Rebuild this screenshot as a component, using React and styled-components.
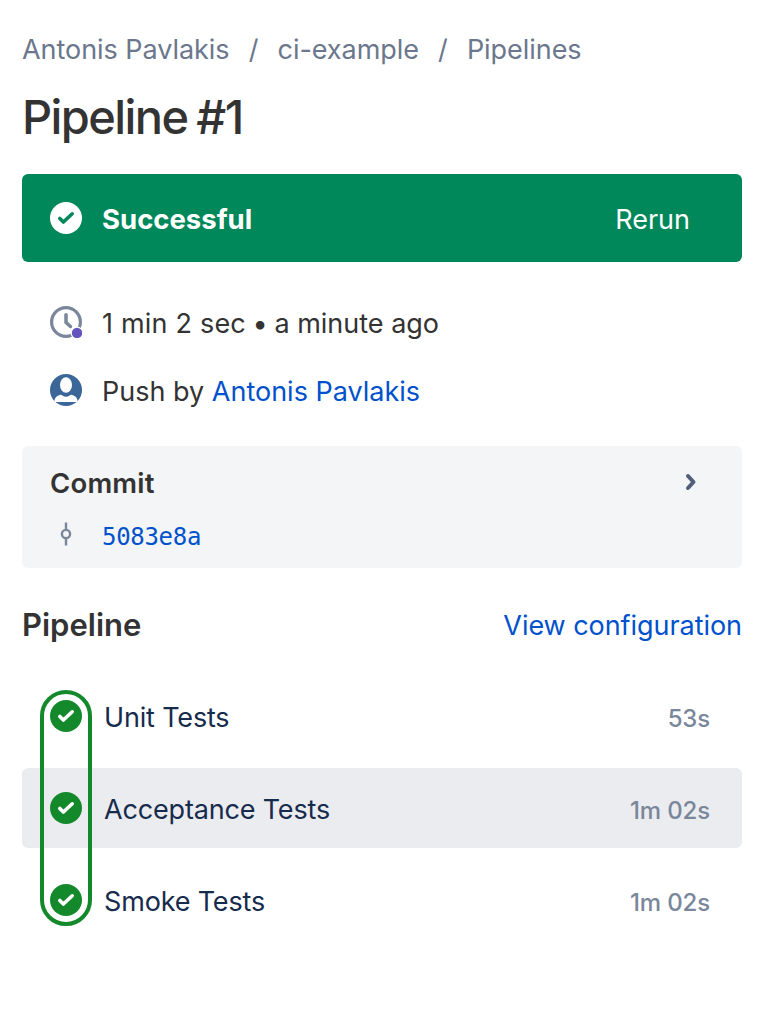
import React from "react";
import styled, { createGlobalStyle } from "styled-components";

const GlobalStyle = createGlobalStyle`
  *, *::before, *::after { box-sizing: border-box; }
  body {
    margin: 0;
    background: #fff;
    color: #333;
    font: 400 27px/40px Inter, "Liberation Sans", sans-serif;
  }
  h1, h2, h3, p, ul, ol { margin: 0; padding: 0; }
  svg { display: block; flex: none; }
`;

const Page = styled.main`
  width: 762px;
  min-height: 1036px;
  padding: 30px 20px 0 22px;
`;

const Breadcrumbs = styled.nav`
  display: flex;
  color: #6b778c;
`;

const Crumb = styled.span`
  letter-spacing: -0.05px;
  & + &::before {
    content: "/";
    display: inline-block;
    width: 48px;
    text-align: center;
  }
`;

const Title = styled.h1`
  margin-top: 17px;
  font-size: 47px;
  font-weight: 500;
  line-height: 60px;
  letter-spacing: -1.6px;
  word-spacing: -2px;
`;

const Banner = styled.section`
  display: flex;
  align-items: center;
  height: 88px;
  margin-top: 27px;
  padding: 0 52px 0 28px;
  border-radius: 6px;
  background: #00875a;
  color: #fff;
`;

const BannerText = styled.strong`
  flex: 1;
  margin-left: 20px;
  padding-top: 2px;
  font-size: 27.5px;
  font-weight: 700;
`;

const TextButton = styled.button`
  padding: 3px 0 0;
  border: 0;
  background: none;
  color: inherit;
  font: inherit;
`;

const Details = styled.div`
  display: grid;
  gap: 28px;
  padding: 40px 28px 0;
`;

const DetailRow = styled.div`
  display: flex;
  align-items: center;
  gap: 20px;
  height: 40px;
`;

const Link = styled.a`
  color: #0052cc;
`;

const DetailText = styled.p`
  padding-top: 3px;
`;

const Elapsed = styled.span`
  letter-spacing: 0.2px;
`;

const Separator = styled.span`
  margin: 0 -1px;
`;

const CommitCard = styled.section`
  height: 122px;
  margin-top: 36px;
  padding: 16px 44px 0 28px;
  border-radius: 6px;
  background: #f4f5f7;
`;

const CardHeader = styled.header`
  display: flex;
  align-items: center;
  justify-content: space-between;
  height: 41px;
`;

const Heading = styled.h2`
  font-size: ${(p) => p.$size || 27}px;
  font-weight: 600;
  letter-spacing: ${(p) => p.$spacing || 0}px;
`;

const CommitRow = styled.div`
  display: flex;
  align-items: center;
  gap: 20px;
  height: 40px;
  margin-top: 11px;
`;

const Hash = styled.a`
  padding-top: 5px;
  color: #0052cc;
  font: 24px/40px "DejaVu Sans Mono", monospace;
  letter-spacing: -0.3px;
`;

const SectionHeader = styled.header`
  display: flex;
  justify-content: space-between;
  height: 41px;
  margin-top: 37px;
`;

const ConfigLink = styled(Link)`
  padding-top: 1px;
  letter-spacing: -0.05px;
`;

const Stages = styled.ol`
  position: relative;
  display: grid;
  gap: 12px;
  margin-top: 30px;
  list-style: none;
`;

const StageGroup = styled.span`
  position: absolute;
  top: 14px;
  bottom: 14px;
  left: 18px;
  width: 52px;
  border: 4px solid #14892c;
  border-radius: 26px;
`;

const Stage = styled.li`
  display: flex;
  align-items: center;
  height: 80px;
  padding: 0 32px 0 28px;
  border-radius: 6px;
  background: ${(p) => (p.$active ? "#ebecf0" : "transparent")};
  color: #172b4d;
`;

const StageName = styled.span`
  flex: 1;
  margin-left: 22px;
  padding-top: 4px;
  letter-spacing: -0.17px;
`;

const Duration = styled.span`
  padding-top: 6px;
  color: #7a869a;
  font-size: 24px;
  font-weight: 500;
  letter-spacing: -0.15px;
`;

function CheckCircle({ fill, mark }) {
  return (
    <svg width="32" height="32" viewBox="4 4 16 16">
      <circle cx="12" cy="12" r="8" fill={fill} />
      <path
        d="M8.9 12.2L10.7 14L15.1 9.9"
        fill="none"
        stroke={mark}
        strokeWidth="1.8"
        strokeLinecap="round"
        strokeLinejoin="round"
      />
    </svg>
  );
}

function ClockIcon() {
  return (
    <svg width="32" height="32" viewBox="0 0 32 32" fill="none">
      <circle cx="16" cy="16" r="14.4" stroke="#7a869a" strokeWidth="3.2" />
      <path d="M16 8.8V16.5L20.5 20.5" stroke="#7a869a" strokeWidth="3.5" strokeLinecap="round" strokeLinejoin="round" />
      <circle cx="27" cy="27" r="6.5" fill="#fff" />
      <circle cx="27" cy="27" r="5.2" fill="#6554c0" />
    </svg>
  );
}

function AvatarIcon() {
  return (
    <svg width="32" height="32" viewBox="0 0 32 32">
      <circle cx="16" cy="16" r="16" fill="#3b6698" />
      <ellipse cx="16" cy="11" rx="6" ry="7.8" fill="#fff" />
      <path d="M4.400 28c0-4 2-6.200 6.200-7.200 1.300 0 2.700 2 5.400 2s4.100-2 5.400-2c4.200 1 6.200 3.200 6.200 7.200z" fill="#fff" />
    </svg>
  );
}

function CommitIcon() {
  return (
    <svg width="32" height="32" viewBox="0 0 32 32" fill="none" stroke="#7a869a">
      <circle cx="16" cy="16" r="4.1" strokeWidth="2.4" />
      <path d="M16 4.5V11M16 21V27.5" strokeWidth="2.4" />
    </svg>
  );
}

function ChevronIcon() {
  return (
    <svg width="14" height="20" viewBox="0 0 14 20" fill="none">
      <path d="M4 3L9.5 9L4 15" stroke="#505f79" strokeWidth="4" strokeLinecap="round" strokeLinejoin="round" />
    </svg>
  );
}

const stages = [
  { name: "Unit Tests", time: "53s" },
  { name: "Acceptance Tests", time: "1m 02s", active: true },
  { name: "Smoke Tests", time: "1m 02s" },
];

export default function App() {
  return (
    <Page>
      <GlobalStyle />
      <Breadcrumbs>
        <Crumb>Antonis Pavlakis</Crumb>
        <Crumb>ci-example</Crumb>
        <Crumb>Pipelines</Crumb>
      </Breadcrumbs>
      <Title>Pipeline #1</Title>
      <Banner>
        <CheckCircle fill="#fff" mark="#00875a" />
        <BannerText>Successful</BannerText>
        <TextButton>Rerun</TextButton>
      </Banner>
      <Details>
        <DetailRow>
          <ClockIcon />
          <DetailText>
            <Elapsed>1 min 2 sec</Elapsed> <Separator>•</Separator> a minute ago
          </DetailText>
        </DetailRow>
        <DetailRow>
          <AvatarIcon />
          <DetailText>
            Push by <Link>Antonis Pavlakis</Link>
          </DetailText>
        </DetailRow>
      </Details>
      <CommitCard>
        <CardHeader>
          <Heading $size={27.5} $spacing={0.2}>Commit</Heading>
          <ChevronIcon />
        </CardHeader>
        <CommitRow>
          <CommitIcon />
          <Hash>5083e8a</Hash>
        </CommitRow>
      </CommitCard>
      <SectionHeader>
        <Heading $size={31}>Pipeline</Heading>
        <ConfigLink>View configuration</ConfigLink>
      </SectionHeader>
      <Stages>
        {stages.map((s) => (
          <Stage key={s.name} $active={s.active}>
            <CheckCircle fill="#14892c" mark="#fff" />
            <StageName>{s.name}</StageName>
            <Duration>{s.time}</Duration>
          </Stage>
        ))}
        <StageGroup />
      </Stages>
    </Page>
  );
}
